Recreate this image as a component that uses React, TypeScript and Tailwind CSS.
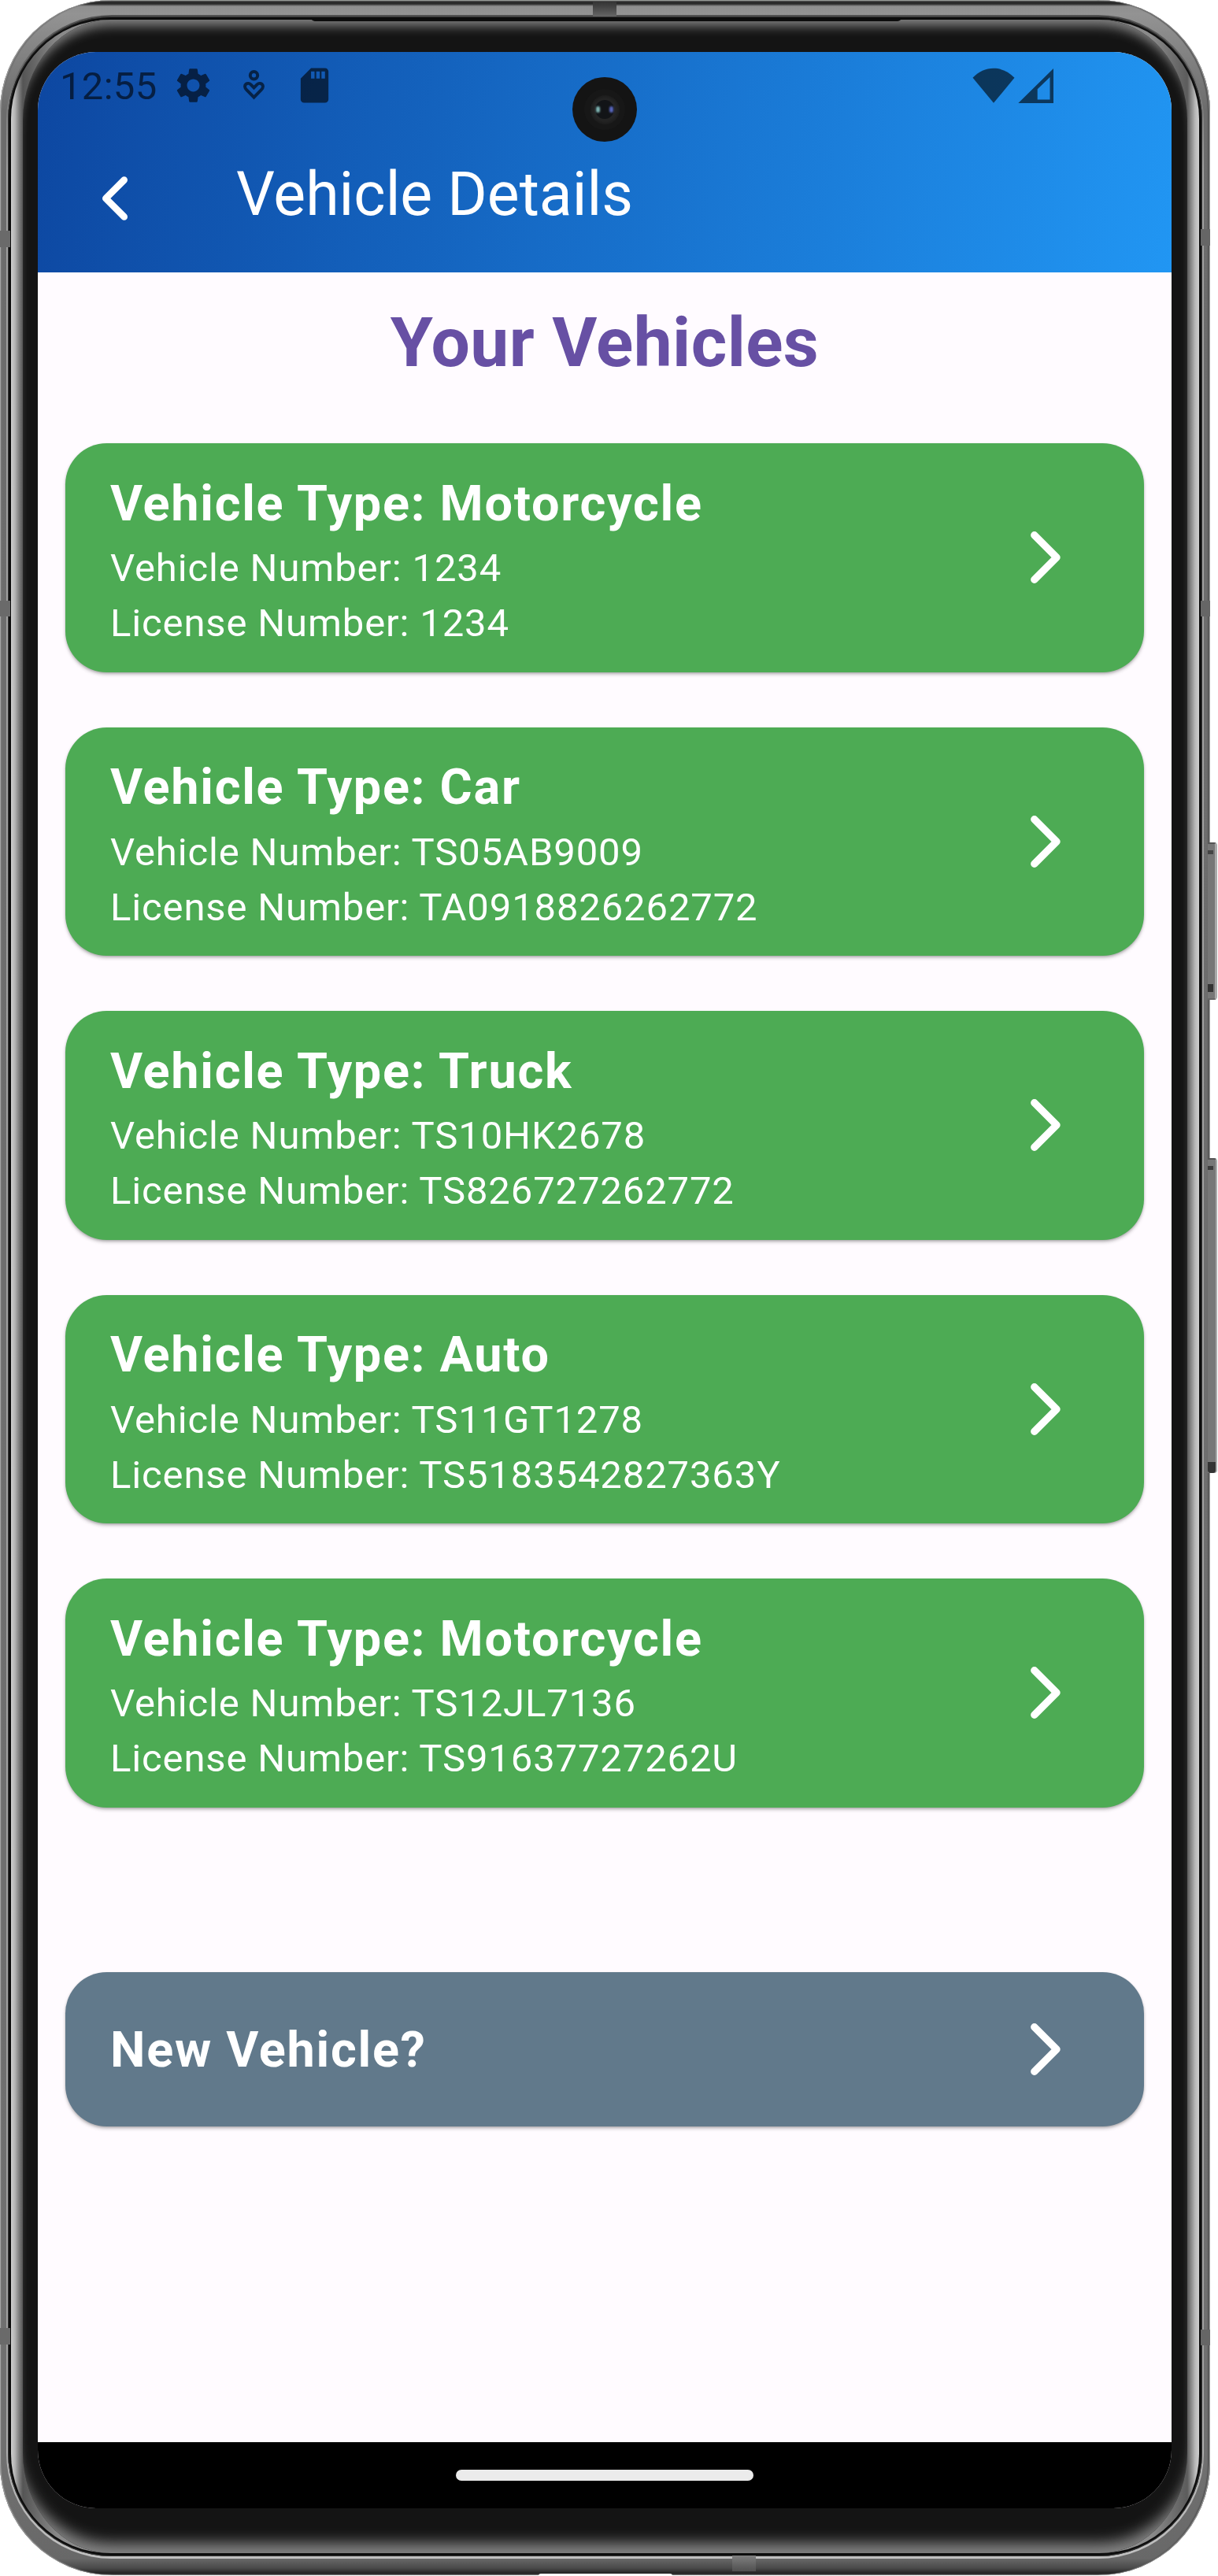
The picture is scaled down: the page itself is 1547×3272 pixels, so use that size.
import { MdSdCard, MdSettings } from 'react-icons/md';

type Vehicle = { type: string; number: string; license: string };

const vehicles: Vehicle[] = [
  { type: 'Motorcycle', number: '1234', license: '1234' },
  { type: 'Car', number: 'TS05AB9009', license: 'TA0918826262772' },
  { type: 'Truck', number: 'TS10HK2678', license: 'TS826727262772' },
  { type: 'Auto', number: 'TS11GT1278', license: 'TS5183542827363Y' },
  { type: 'Motorcycle', number: 'TS12JL7136', license: 'TS91637727262U' },
];

function ChevronRight() {
  return (
    <svg className="h-[66px] w-[38px] shrink-0" viewBox="0 0 38 66" fill="none">
      <path d="M4.8 4.8 33 33 4.8 61.2" stroke="white" strokeWidth="9.4" strokeLinecap="round" strokeLinejoin="round" />
    </svg>
  );
}

function StatusBar() {
  return (
    <div className="flex h-[84px] items-center pl-[28px] text-black/60">
      <span className="w-[143px] pt-[3px] text-[49px] leading-[57px] tracking-[0.3px]">12:55</span>
      <MdSettings className="size-[53px]" />
      <svg className="ml-[37px] h-[38px] w-[27px]" viewBox="0 0 27 38" fill="none" stroke="currentColor" strokeWidth="4">
        <circle cx="13.5" cy="6.7" r="4.7" />
        <path
          d="M13.5 34.6 4.2 25.2C1.3 22.3 1.6 19.4 3.4 17.9 5.3 16.3 8 16.7 9.8 18.6L13.5 22.4 17.2 18.6C19 16.7 21.7 16.3 23.6 17.9 25.4 19.4 25.7 22.3 22.8 25.2Z"
          strokeLinejoin="miter"
        />
      </svg>
      <MdSdCard className="ml-[37px] size-[53px]" />
      <div className="mr-[150px] ml-auto flex gap-[4px]">
        <svg className="h-[45px] w-[54px]" viewBox="0 0 54 45" fill="currentColor">
          <path d="M0.500 12.800C8 5 17 0.800 27 0.800S46 5 53.500 12.800L27 44.800Z" />
        </svg>
        <svg className="h-[45px] w-[45px]" viewBox="0 0 45 45" fill="currentColor" fillRule="evenodd">
          <path d="M0.300 45 45 1V45ZM24.700 27.200V40.600H40.500V12Z" />
        </svg>
      </div>
    </div>
  );
}

function Camera() {
  return (
    <div className="absolute top-[32px] left-[679px] flex size-[82px] items-center justify-center rounded-full bg-[#141414]">
      <div className="flex size-[52px] items-center justify-center rounded-full bg-[#171717]">
        <div className="flex size-[37px] items-center justify-center rounded-full bg-[#262626] shadow-[inset_0_0_6px_#141414]">
          <div className="flex size-[24px] items-center justify-between rounded-full bg-[#121417] px-[1px]">
            <span className="h-[8px] w-[5px] rounded-full bg-[#7fb5b3] blur-[1px]" />
            <span className="h-[8px] w-[5px] rounded-full bg-[#5866bd] blur-[1px]" />
          </div>
        </div>
      </div>
    </div>
  );
}

function AppBar() {
  return (
    <header className="relative h-[280px] bg-[linear-gradient(101deg,#0d47a1,#2196f3)]">
      <StatusBar />
      <div className="flex items-start pt-[52px] pl-[82px] text-white">
        <svg className="mt-[22px] h-[56px] w-[33px]" viewBox="0 0 33 56" fill="none">
          <path d="M27.700 4.600 4.300 28 27.700 51.400" stroke="white" strokeWidth="8.600" strokeLinecap="round" strokeLinejoin="round" />
        </svg>
        <h1 className="ml-[137px] text-[77px] leading-[90px]">Vehicle Details</h1>
      </div>
      <Camera />
    </header>
  );
}

function VehicleCard({ vehicle }: { vehicle: Vehicle }) {
  return (
    <article className="flex h-[290.5px] items-center justify-between rounded-[52.5px] bg-[#4dab54] pr-[106px] pl-[57px] text-white shadow-[0_3px_5px_-1px_rgba(0,0,0,0.3),0_1px_3px_rgba(0,0,0,0.12)]">
      <div className="pt-[3px] text-[49px] leading-[70px] tracking-[0.86px]">
        <h3 className="text-[63px] leading-[94.5px] font-bold tracking-[1.72px]">Vehicle Type: {vehicle.type}</h3>
        <p>Vehicle Number: {vehicle.number}</p>
        <p>License Number: {vehicle.license}</p>
      </div>
      <ChevronRight />
    </article>
  );
}

function Screen() {
  return (
    <div className="flex h-[3120px] w-[1440px] flex-col overflow-hidden rounded-[74px] bg-[#fffbff]">
      <AppBar />
      <main className="flex-1 px-[35px] pt-[38px]">
        <h2 className="text-center text-[87.5px] leading-[102px] font-bold tracking-[0.4px] text-[#6750a4]">Your Vehicles</h2>
        <section className="mt-[77px] flex flex-col gap-[70px]">
          {vehicles.map((v) => (
            <VehicleCard key={v.number} vehicle={v} />
          ))}
        </section>
        <div className="mt-[209.5px] flex h-[196px] items-center justify-between rounded-[52.5px] bg-[#61798b] pr-[106px] pl-[57px] text-white shadow-[0_3px_5px_-1px_rgba(0,0,0,0.3),0_1px_3px_rgba(0,0,0,0.12)]">
          <span className="pt-[3px] text-[63px] leading-[94.5px] font-bold tracking-[1.72px]">New Vehicle?</span>
          <ChevronRight />
        </div>
      </main>
      <nav className="flex h-[84px] items-center justify-center bg-black">
        <div className="h-[14px] w-[378px] rounded-full bg-[#ebebeb]" />
      </nav>
    </div>
  );
}

/* Antenna bands, speaker slit, charging port and side keys lying on the metal rim. */
function RimDetails() {
  return (
    <>
      <span className="absolute top-[293px] left-0 h-[21px] w-[13px] bg-[#6a6a6a]" />
      <span className="absolute top-[763px] left-0 h-[20px] w-[13px] bg-[#6a6a6a]" />
      <span className="absolute top-[2957px] left-0 h-[21px] w-[13px] bg-[#6a6a6a]" />
      <span className="absolute top-[291px] left-[1525px] h-[21px] w-[12px] bg-[#666]" />
      <span className="absolute top-[763px] left-[1525px] h-[20px] w-[12px] bg-[#666]" />
      <span className="absolute top-[2959px] left-[1525px] h-[20px] w-[12px] bg-[#666]" />
      <span className="absolute top-[2px] left-[753px] h-[19px] w-[30px] bg-linear-to-b from-[#333] to-[#666]" />
      <span className="absolute top-[3246px] left-[930px] h-[20px] w-[30px] bg-linear-to-b from-[#808080] to-[#505050]" />
      <span className="absolute top-[22px] left-[395px] h-[5px] w-[750px] rounded-b-full bg-[#0d0d0d]" />
      <span className="absolute top-[3269px] left-[684px] h-[3px] w-[170px] rounded-t-full bg-white" />
      <span className="absolute top-[1070px] left-[1534px] flex h-[200px] w-[12px] flex-col justify-between rounded-r-[4px] border-y-[2px] border-r-[3px] border-[#aaa] border-t-[#555] border-b-[#666] bg-[#777] py-[8px]">
        <i className="h-[5px] w-[7px] bg-[#444]" />
        <i className="h-[10px] w-[7px] bg-[#333]" />
      </span>
      <span className="absolute top-[1471px] left-[1534px] flex h-[400px] w-[12px] flex-col justify-between rounded-r-[4px] border-t-[2px] border-r-[2px] border-[#aaa] border-t-[#555] bg-[#777] pt-[8px]">
        <i className="h-[5px] w-[7px] bg-[#3c3c3c]" />
        <i className="h-[14px] w-[10px] rounded-b-[4px] bg-[#333]" />
      </span>
    </>
  );
}

export default function App() {
  return (
    <div className="relative h-[3272px] w-[1547px] overflow-hidden bg-white font-[Roboto,sans-serif]">
      <div className="h-[3271px] w-[1537px] rounded-[142px] bg-[linear-gradient(180deg,#c5cac5_0,#2a2a2a_2px,#2a2a2a_5px,#8e8e8e_8px,#939393_17px,#6c6c6c_140px,#707070_3130px,#686868_3250px,#4a4a4a_3262px,#202020_3269px,#777_3271px)] px-[8px] pt-[19px] pb-[21px] shadow-[inset_1px_0_1px_#aaa,inset_-1px_0_1px_#aaa,inset_-3px_0_1px_#555,inset_3px_0_1px_#707070]">
        <div className="h-full rounded-[134px] bg-[linear-gradient(180deg,#505050_0,#505050_3px,#a0a0a0_200px,#a0a0a0_3000px,#c0c0c0)] px-[2px] pt-[2px] pb-[3px]">
          <div className="h-full rounded-[132px] bg-[#0c0c0c] p-[4px] shadow-[inset_0_0_1px_1px_#3a3a3a]">
            <div className="h-full rounded-[126px] bg-[linear-gradient(90deg,#cfcfcf_0,#b4b4b4_5px,#808080_10px,#555_15px,#8a8a8a_60px,#8a8a8a_1449px,#5c5c5c_1494px,#8a8a8a_1499px,#b8b8b8_1504px,#cfcfcf)] px-[15px]">
              <div className="h-full rounded-[112px/128px] bg-[#141414] pt-[41px] pl-[19px] shadow-[inset_0_17px_14px_-9px_#808080,inset_0_-24px_18px_-11px_#848484]">
                <Screen />
              </div>
            </div>
          </div>
        </div>
      </div>
      <RimDetails />
    </div>
  );
}
